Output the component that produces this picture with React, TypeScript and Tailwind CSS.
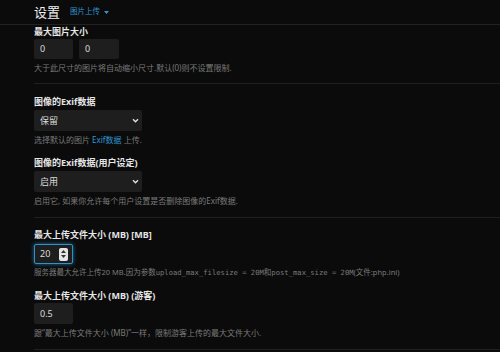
import { ReactNode } from 'react'

const sans = '"Noto Sans", "Noto Sans CJK SC", sans-serif'
const mono = '"DejaVu Sans Mono", "Noto Sans CJK SC", monospace'

function Label({ children, first }: { children: ReactNode; first?: boolean }) {
    return (
        <div className={`${first ? '' : 'mt-[12px]'} text-[9px] leading-[12px] font-bold text-[#e6e6e6]`}>
            {children}
        </div>
    )
}

function Help({ children }: { children: ReactNode }) {
    return <div className="mt-[3px] text-[8px] leading-[11px] text-[#7a7a7a]">{children}</div>
}

function TextBox({ value, width }: { value: string; width: string }) {
    return (
        <div className={`${width} flex h-[20px] items-center rounded-[2px] bg-[#1e1e1e] px-[6px] text-[9px] text-[#dcdcdc]`}>
            {value}
        </div>
    )
}

function Select({ value }: { value: string }) {
    return (
        <div className="mt-[2px] flex h-[21px] w-[108px] items-center justify-between rounded-[2px] bg-[#1e1e1e] pr-[3px] pl-[6px] text-[9px] text-[#dcdcdc]">
            <span>{value}</span>
            <svg width="7" height="5" viewBox="0 0 7 5">
                <path d="M1 1.2 3.5 3.7 6 1.2" fill="none" stroke="#e0e0e0" strokeWidth="1.4" />
            </svg>
        </div>
    )
}

export default function App() {
    return (
        <div className="h-[352px] w-[500px] overflow-hidden bg-[#0b0b0b]" style={{ fontFamily: sans }}>
            <div className="flex h-[25px] items-center border-b border-[#222] pl-[34px]">
                <span className="text-[13px] leading-none text-[#f0f0f0]">设置</span>
                <span className="ml-[10px] flex items-center text-[7.5px] text-[#2f97d3]">
                    图片上传
                    <svg className="ml-[4px]" width="5" height="3" viewBox="0 0 5 3">
                        <path d="M0 0h5L2.5 3z" fill="#2f97d3" />
                    </svg>
                </span>
            </div>

            <div className="ml-[34px]">
                <div className="border-b border-[#1f1f1f] pt-[1px] pb-[10px]">
                    <Label first>最大图片大小</Label>
                    <div className="mt-[1px] flex gap-[6px]">
                        <TextBox value="0" width="w-[39px]" />
                        <TextBox value="0" width="w-[40px]" />
                    </div>
                    <Help>大于此尺寸的图片将自动缩小尺寸.默认(0)则不设置限制.</Help>
                </div>

                <div className="border-b border-[#1f1f1f] pt-[12px] pb-[11px]">
                    <Label first>图像的Exif数据</Label>
                    <Select value="保留" />
                    <Help>
                        选择默认的图片 <span className="text-[#2f97d3]">Exif数据</span> 上传.
                    </Help>
                    <Label>图像的Exif数据(用户设定)</Label>
                    <Select value="启用" />
                    <Help>启用它, 如果你允许每个用户设置是否删除图像的Exif数据.</Help>
                </div>

                <div className="border-b border-[#1f1f1f] pt-[11px] pb-[11px]">
                    <Label first>最大上传文件大小 (MB) [MB]</Label>
                    <div className="mt-[3px] flex h-[20px] w-[39px] items-center justify-between rounded-[2px] border border-[#3192c9] bg-[#1e1e1e] pr-[4px] pl-[5px] text-[9px] text-[#dcdcdc] shadow-[0_0_4px_#1f6f9c]">
                        <span>20</span>
                        <div className="flex h-[13px] w-[9px] flex-col items-center justify-center gap-[2px] rounded-[2px] bg-[#e4e4e4]">
                            <svg width="5" height="3" viewBox="0 0 5 3">
                                <path d="M0 3h5L2.5 0z" fill="#333" />
                            </svg>
                            <svg width="5" height="3" viewBox="0 0 5 3">
                                <path d="M0 0h5L2.5 3z" fill="#333" />
                            </svg>
                        </div>
                    </div>
                    <div className="mt-[3px] whitespace-nowrap text-[7.5px] leading-[11px] text-[#7a7a7a]">
                        服务器最大允许上传20 MB.因为参数
                        <span className="text-[7.2px]" style={{ fontFamily: mono }}>
                            upload_max_filesize = 20M
                        </span>
                        和
                        <span className="text-[7.2px]" style={{ fontFamily: mono }}>
                            post_max_size = 20M
                        </span>
                        (文件:php.ini)
                    </div>
                    <Label>最大上传文件大小 (MB) (游客)</Label>
                    <div className="mt-[1px]">
                        <TextBox value="0.5" width="w-[39px] h-[21px]" />
                    </div>
                    <Help>跟“最大上传文件大小 (MB)”一样，限制游客上传的最大文件大小.</Help>
                </div>
            </div>
        </div>
    )
}
